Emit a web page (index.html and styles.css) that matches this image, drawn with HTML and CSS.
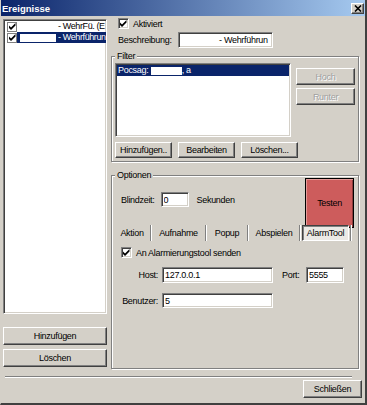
FILE: index.html
```html
<!DOCTYPE html>
<html lang="de">

<head>
  <meta charset="UTF-8">
  <meta name="viewport" content="width=device-width, initial-scale=1.0">
  <title>Ereignisse</title>
  <link rel="stylesheet" href="styles.css">
</head>

<body>
  <div class="fenster">
    <div class="titel">
      <span>Ereignisse</span>
      <button class="titel-x">
        <svg width="8" height="7" viewBox="0 0 8 7"><path d="M1 0.5 L7 6.5 M7 0.5 L1 6.5" stroke="#000" stroke-width="1.6"/></svg>
      </button>
    </div>

    <div class="inhalt">
      <!-- Liste der Ereignisse -->
      <div class="links">
        <div class="liste ereignisse">
          <div class="zeile">
            <span class="check klein"><svg width="7" height="7" viewBox="0 0 7 7"><path d="M0 2.5 L2 4.5 L6.5 0 L6.5 2.5 L2 7 L0 5Z" fill="#000"/></svg></span>
            <span class="eintrag"><span class="geschwaerzt"></span> - WehrFü. (E</span>
          </div>
          <div class="zeile">
            <span class="check klein"><svg width="7" height="7" viewBox="0 0 7 7"><path d="M0 2.5 L2 4.5 L6.5 0 L6.5 2.5 L2 7 L0 5Z" fill="#000"/></svg></span>
            <span class="eintrag markiert"><span class="geschwaerzt"></span> - Wehrführun</span>
          </div>
        </div>
        <button class="knopf links-knopf">Hinzufügen</button>
        <button class="knopf links-knopf abstand">Löschen</button>
      </div>

      <div class="rechts">
        <div class="aktiviert">
          <span class="check"><svg width="7" height="7" viewBox="0 0 7 7"><path d="M0 2.5 L2 4.5 L6.5 0 L6.5 2.5 L2 7 L0 5Z" fill="#000"/></svg></span>
          <span>Aktiviert</span>
        </div>
        <div class="beschreibung">
          <span>Beschreibung:</span>
          <div class="feld beschreibung-feld">- Wehrführun</div>
        </div>

        <fieldset class="gruppe filter">
          <legend>Filter</legend>
          <div class="filter-oben">
            <div class="liste filter-liste">
              <div class="filter-eintrag"><span>Pocsag:</span> <span class="geschwaerzt weiss"></span>, a</div>
            </div>
            <div class="filter-seite">
              <button class="knopf seiten-knopf" disabled>Hoch</button>
              <button class="knopf seiten-knopf" disabled>Runter</button>
            </div>
          </div>
          <div class="filter-unten">
            <button class="knopf filter-knopf">Hinzufügen..</button>
            <button class="knopf filter-knopf">Bearbeiten</button>
            <button class="knopf filter-knopf">Löschen...</button>
          </div>
        </fieldset>

        <fieldset class="gruppe optionen">
          <legend>Optionen</legend>
          <div class="opt-oben">
            <div class="blindzeit">
              <span>Blindzeit:</span>
              <input type="text" class="feld blindzeit-feld" value="0">
              <span>Sekunden</span>
            </div>
            <button class="testen">Testen</button>
          </div>

          <div class="reiter">
            <span class="reiter-knopf">Aktion</span><span class="reiter-trenner"></span>
            <span class="reiter-knopf">Aufnahme</span><span class="reiter-trenner"></span>
            <span class="reiter-knopf">Popup</span><span class="reiter-trenner"></span>
            <span class="reiter-knopf">Abspielen</span><span class="reiter-trenner"></span>
            <span class="reiter-knopf aktiv">AlarmTool</span><span class="reiter-trenner"></span>
          </div>

          <div class="senden">
            <span class="check"><svg width="7" height="7" viewBox="0 0 7 7"><path d="M0 2.5 L2 4.5 L6.5 0 L6.5 2.5 L2 7 L0 5Z" fill="#000"/></svg></span>
            <span>An Alarmierungstool senden</span>
          </div>

          <div class="form-zeile host-zeile">
            <span class="form-label">Host:</span>
            <input type="text" class="feld form-feld" value="127.0.0.1">
            <span class="port-label">Port:</span>
            <input type="text" class="feld port-feld" value="5555">
          </div>
          <div class="form-zeile benutzer-zeile">
            <span class="form-label">Benutzer:</span>
            <input type="text" class="feld form-feld" value="5">
          </div>
        </fieldset>
      </div>
    </div>

    <div class="fuss">
      <div class="trenner"></div>
      <div class="fuss-knoepfe">
        <button class="knopf schliessen">Schließen</button>
      </div>
    </div>
  </div>
</body>

</html>
```

FILE: styles.css
```css
body {
  margin: 0;
  background: #d4d0c8;
  font-family: "Liberation Sans", Arial, sans-serif;
  font-size: 9px;
  letter-spacing: -0.3px;
  color: #000;
}

.fenster {
  width: 367px;
  height: 405px;
  box-sizing: border-box;
  border-left: 1px solid #d4d0c8;
  border-right: 2px solid #404040;
  border-bottom: 2px solid #404040;
  display: flex;
  flex-direction: column;
  background: #d4d0c8;
}

.titel {
  height: 16px;
  flex: none;
  display: flex;
  align-items: center;
  justify-content: space-between;
  padding: 0 1px 0 1px;
  background: linear-gradient(to right, #0a246a, #a6caf0);
  color: #fff;
  font-weight: bold;
  font-size: 9.5px;
  letter-spacing: 0;
}

.titel-x {
  width: 13px;
  height: 11px;
  padding: 0;
  display: flex;
  align-items: center;
  justify-content: center;
  background: #d4d0c8;
  border: 1px solid;
  border-color: #fff #404040 #404040 #fff;
  box-shadow: inset -1px -1px #808080;
}

/* Knöpfe und Felder im klassischen Stil */
.knopf {
  font-family: "Liberation Sans", Arial, sans-serif;
  font-size: 9px;
  letter-spacing: -0.3px;
  color: #000;
  background: #d4d0c8;
  border: 1px solid;
  border-color: #fff #404040 #404040 #fff;
  box-shadow: inset -1px -1px #808080;
  padding: 0;
  height: 18px;
}

.knopf:disabled {
  color: #a0a0a0;
  text-shadow: 1px 1px #fff;
}

.feld {
  box-sizing: border-box;
  height: 16px;
  border: 1px solid;
  border-color: #808080 #fff #fff #808080;
  box-shadow: inset 1px 1px #404040, inset -1px -1px #d4d0c8;
  background: #fff;
  padding: 0 2px;
  font-family: "Liberation Sans", Arial, sans-serif;
  font-size: 9px;
  letter-spacing: -0.3px;
  color: #000;
  outline: none;
}

.liste {
  box-sizing: border-box;
  background: #fff;
  border: 1px solid;
  border-color: #808080 #fff #fff #808080;
  box-shadow: inset 1px 1px #404040, inset -1px -1px #d4d0c8;
  padding: 1px;
  overflow: hidden;
}

.check {
  box-sizing: border-box;
  width: 11px;
  height: 11px;
  flex: none;
  display: flex;
  align-items: center;
  justify-content: center;
  background: #fff;
  border: 1px solid;
  border-color: #808080 #fff #fff #808080;
  box-shadow: inset 1px 1px #404040, inset -1px -1px #d4d0c8;
}

.check.klein {
  width: 10px;
  height: 10px;
  border-color: #808080;
  box-shadow: none;
}

.geschwaerzt {
  display: inline-block;
  width: 36px;
  height: 8px;
  background: #fff;
  vertical-align: middle;
}

.inhalt {
  flex: 1;
  display: flex;
  gap: 4px;
  padding: 2px 0 0 2px;
  min-height: 0;
}

.links {
  width: 104px;
  display: flex;
  flex-direction: column;
  padding: 1px 0 3px;
}

.ereignisse {
  flex: 1;
  margin-bottom: 13px;
}

.zeile {
  display: flex;
  align-items: center;
  height: 11px;
  padding-left: 2px;
}

.eintrag {
  flex: 1;
  height: 11px;
  line-height: 11px;
  padding-left: 3px;
  white-space: nowrap;
  letter-spacing: -0.4px;
}

.markiert {
  background: #0a246a;
  color: #fff;
}

.links-knopf {
  flex: none;
}

.abstand {
  margin-top: 4px;
}

.rechts {
  width: 248px;
  display: flex;
  flex-direction: column;
  padding-bottom: 1px;
}

.aktiviert {
  display: flex;
  align-items: center;
  gap: 4px;
  height: 11px;
  padding-left: 7px;
}

.beschreibung {
  display: flex;
  align-items: center;
  margin-top: 3px;
  padding-left: 7px;
}

.beschreibung span {
  width: 60px;
}

.beschreibung-feld {
  width: 95px;
  line-height: 14px;
  padding: 0 0 0 40px;
  white-space: nowrap;
}

.gruppe {
  margin: 0;
  min-width: 0;
  padding: 1px 3px 3px;
  border: 1px solid #808080;
  box-shadow: inset 1px 1px #fff, 1px 1px #fff;
}

.gruppe legend {
  padding: 0 2px;
  line-height: 11px;
  background: #d4d0c8;
}

.filter {
  margin-top: 3px;
}

.filter-oben {
  display: flex;
  gap: 5px;
}

.filter-liste {
  width: 177px;
  height: 74px;
}

.filter-eintrag {
  height: 11px;
  line-height: 11px;
  padding-left: 1px;
  background: #0a246a;
  color: #fff;
  white-space: nowrap;
}

.geschwaerzt.weiss {
  width: 31px;
}

.filter-seite {
  display: flex;
  flex-direction: column;
  gap: 3px;
  padding-top: 5px;
}

.seiten-knopf {
  width: 59px;
  height: 17px;
}

.filter-unten {
  display: flex;
  gap: 6px;
  margin-top: 5px;
}

.filter-knopf {
  width: 57px;
  height: 16px;
}

.optionen {
  flex: 1;
  margin-top: 8px;
  padding-top: 0;
}

.opt-oben {
  display: flex;
  align-items: flex-start;
}

.blindzeit {
  display: flex;
  align-items: center;
  margin-top: 11px;
  padding-left: 6px;
}

.blindzeit-feld {
  width: 28px;
  height: 15px;
  margin: 0 8px 0 6px;
}

.testen {
  width: 49px;
  height: 50px;
  margin: -3px 1px 0 auto;
  padding: 0;
  background: #cd5c5c;
  border: 1px solid #000;
  box-shadow: inset 1px 1px #e49a98, inset -1px -1px #8e3b3b;
  font-family: "Liberation Sans", Arial, sans-serif;
  font-size: 9px;
  letter-spacing: -0.3px;
  color: #000;
}

.reiter {
  display: grid;
  grid-template-columns: 34px 4px 51px 4px 38px 4px 48px 4px 47px 4px;
  height: 16px;
  margin-top: -3px;
}

.reiter-knopf {
  display: flex;
  align-items: center;
  justify-content: center;
  white-space: nowrap;
}

.reiter-knopf.aktiv {
  border: 1px solid;
  border-color: #404040 #fff #fff #404040;
  box-shadow: inset 1px 1px #808080;
  background: #ebe9e5;
}

.reiter-trenner {
  width: 0;
  margin-left: 1px;
  border-left: 1px solid #808080;
  border-right: 1px solid #fff;
}

.senden {
  display: flex;
  align-items: center;
  gap: 4px;
  height: 11px;
  margin-top: 6px;
  padding-left: 6px;
}

.form-zeile {
  display: flex;
  align-items: center;
}

.host-zeile {
  margin-top: 9px;
}

.benutzer-zeile {
  margin-top: 10px;
}

.form-label {
  width: 43px;
  text-align: right;
  margin-right: 4px;
}

.form-feld {
  width: 111px;
}

.benutzer-zeile .form-feld {
  height: 15px;
}

.port-label {
  width: 24px;
  margin-left: 9px;
}

.port-feld {
  width: 38px;
}

.fuss {
  height: 33px;
  flex: none;
  box-sizing: border-box;
  padding: 6px 3px 5px 4px;
}

.trenner {
  border-top: 1px solid #808080;
  border-bottom: 1px solid #fff;
  margin-right: 10px;
}

.fuss-knoepfe {
  display: flex;
  justify-content: flex-end;
  margin-top: 2px;
}

.schliessen {
  width: 59px;
}
```
